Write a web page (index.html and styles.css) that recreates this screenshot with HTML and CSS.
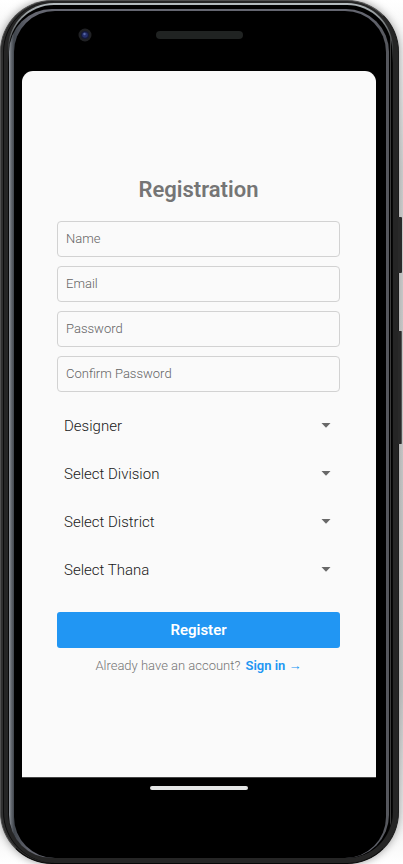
FILE: index.html
```html
<!DOCTYPE html>
<html lang="en">
<head>
<meta charset="utf-8">
<meta name="viewport" content="width=device-width, initial-scale=1">
<title>Registration</title>
<link rel="stylesheet" href="styles.css">
</head>
<body>
<div class="phone">
  <span class="side-key power"></span>
  <span class="side-key volume"></span>
  <div class="chrome">
  <div class="groove">
  <div class="rim">
  <div class="face">
    <div class="top-bezel">
      <svg class="camera" viewBox="0 0 14 14" aria-hidden="true">
        <circle cx="7" cy="7" r="6.5" fill="#202124"/>
        <circle cx="7" cy="7" r="4" fill="#151a3a"/>
        <circle cx="7" cy="7" r="2.8" fill="#26306c"/>
        <circle cx="6.5" cy="6" r="1.2" fill="#5967a5"/>
      </svg>
      <span class="speaker"></span>
    </div>
    <main class="screen">
      <form class="form">
        <h1 class="title">Registration</h1>
        <div class="fields">
          <input class="field" type="text" placeholder="Name" aria-label="Name">
          <input class="field" type="email" placeholder="Email" aria-label="Email">
          <input class="field" type="password" placeholder="Password" aria-label="Password">
          <input class="field" type="password" placeholder="Confirm Password" aria-label="Confirm Password">
        </div>
        <div class="pickers">
          <div class="picker"><select aria-label="Occupation"><option>Designer</option></select><svg class="caret" viewBox="0 0 10 5" aria-hidden="true"><path d="M.5 0h9L5 4.8z"/></svg></div>
          <div class="picker"><select aria-label="Division"><option>Select Division</option></select><svg class="caret" viewBox="0 0 10 5" aria-hidden="true"><path d="M.5 0h9L5 4.8z"/></svg></div>
          <div class="picker"><select aria-label="District"><option>Select District</option></select><svg class="caret" viewBox="0 0 10 5" aria-hidden="true"><path d="M.5 0h9L5 4.8z"/></svg></div>
          <div class="picker"><select aria-label="Thana"><option>Select Thana</option></select><svg class="caret" viewBox="0 0 10 5" aria-hidden="true"><path d="M.5 0h9L5 4.8z"/></svg></div>
        </div>
        <button class="register" type="button">Register</button>
        <p class="signin">Already have an account? <a href="#">Sign in →</a></p>
      </form>
    </main>
    <div class="bottom-bezel"><span class="home-bar"></span></div>
  </div>
  </div>
  </div>
  </div>
</div>
</body>
</html>
```
FILE: styles.css
```css
* { box-sizing: border-box; }
body {
  margin: 0;
  background: linear-gradient(#fff, #d4d4d4 20%, #c8c8c8 80%, #fff);
  font-family: Roboto, "Liberation Sans", sans-serif;
  font-weight: 350;
}
.phone {
  position: relative;
  display: flex;
  min-height: 100vh;
  margin-right: 4px;
  padding: 2px 5px 5px 7px;
  border: 1px solid #505050;
  border-right-color: #1c1c1c;
  border-bottom-color: #080808;
  border-radius: 52px;
  background: #252525;
  box-shadow: inset 2px 0 #303030, inset 3px 0 #0c0c0c, 0 0 8px #999;
}
.side-key {
  position: absolute;
  left: 100%;
  width: 4px;
  background: #292929;
  border-radius: 0 1px 1px 0;
}
.power { top: 216px; height: 56px; }
.volume { top: 330px; height: 113px; border-right: 1px solid #555; }
.chrome, .groove, .rim, .face { display: flex; flex: 1; }
.chrome {
  padding: 2px 1px 0 1px;
  border-radius: 46px;
  background: linear-gradient(#b6bdc0, #080808 60px);
}
.groove {
  padding: 4px 3px 0 0;
  border-radius: 45px;
  background: linear-gradient(90deg, #000 calc(100% - 2px), #3c3c3c calc(100% - 2px), #3c3c3c calc(100% - 1px), #000 calc(100% - 1px));
}
.rim {
  padding: 2px 3px 0 5px;
  border-radius: 43px;
  background: linear-gradient(90deg, #9499a0, #686d74 2px, #41464d 5px, #646670 20px, #646670 calc(100% - 20px), #55575d calc(100% - 2px), #55575d);
}
.face {
  flex-direction: column;
  padding: 0 10px 0 8px;
  border-radius: 41px;
  background: #000;
}
.top-bezel {
  display: grid;
  grid-template-columns: 1fr auto 1fr;
  align-items: center;
  height: 60px;
  padding-bottom: 13px;
}
.camera { width: 14px; height: 14px; margin-left: 56px; }
.speaker {
  grid-column: 2;
  width: 87px;
  height: 8px;
  border-radius: 4px;
  background: #202322;
}
.screen {
  flex: 1;
  padding: 105px 36px 100px 35px;
  border-bottom: 1px solid #444;
  border-radius: 11px 11px 0 0;
  background: #fafafa;
}
.form { display: flex; flex-direction: column; }
.title {
  margin: 0;
  color: #757575;
  font-size: 22px;
  line-height: 28px;
  font-weight: 600;
  text-align: center;
}
.fields {
  display: grid;
  gap: 9px;
  margin-top: 17px;
}
.field {
  width: 100%;
  height: 36px;
  padding: 0 8px 2px;
  border: 1px solid #d2d2d2;
  border-radius: 4px;
  background: #fafafa;
  color: #222;
  font: 350 13px/16px Roboto, sans-serif;
}
.field::placeholder { color: #646464; opacity: 1; }
.pickers { margin-top: 10px; }
.picker {
  display: grid;
  align-items: center;
  height: 48px;
}
.picker select, .caret { grid-area: 1 / 1; }
.picker select {
  width: 100%;
  height: 48px;
  padding: 0 7px;
  border: 0;
  appearance: none;
  background: transparent;
  color: #181818;
  font: 350 15px/20px Roboto, sans-serif;
}
.caret {
  justify-self: end;
  width: 10px;
  height: 5px;
  margin-right: 9px;
  margin-bottom: 2px;
  fill: #686868;
  pointer-events: none;
}
.register {
  height: 36px;
  margin-top: 18px;
  border: 0;
  border-radius: 3px;
  background: #2196f3;
  color: #fff;
  font: 600 15px/20px Roboto, sans-serif;
}
.signin {
  margin: 9px 0 0;
  color: #757575;
  font-size: 13px;
  line-height: 18px;
  text-align: center;
}
.signin a {
  margin-left: 2px;
  color: #2196f3;
  font-weight: 600;
  text-decoration: none;
}
.bottom-bezel {
  height: 80px;
  padding-top: 8px;
}
.home-bar {
  display: block;
  width: 98px;
  height: 4px;
  margin: 0 auto;
  border-radius: 2px;
  background: #e4e6e6;
}
```
